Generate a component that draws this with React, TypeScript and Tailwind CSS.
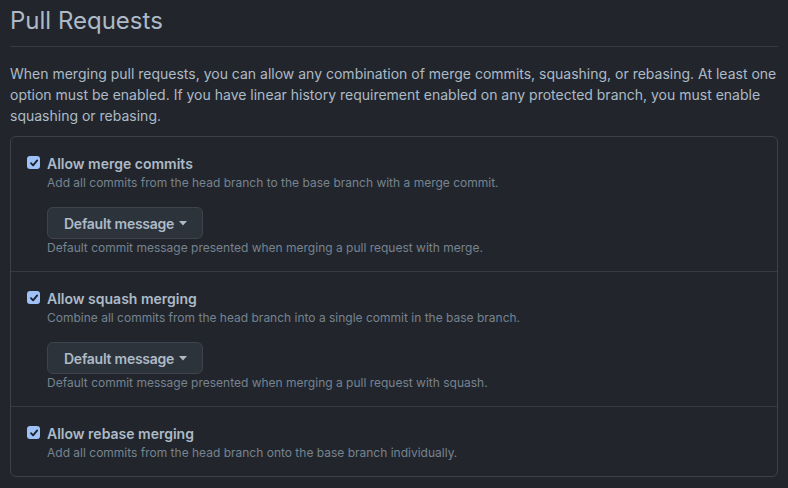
import React from "react";

function Check() {
  return (
    <span className="mt-[3px] mr-[7px] flex h-[13px] w-[13px] shrink-0 items-center justify-center rounded-[3px] bg-[#9ec1f7]">
      <svg width="10" height="10" viewBox="0 0 10 10">
        <path d="M2 5.2 L4.1 7.4 L8.2 2.4" fill="none" stroke="#1c2128" strokeWidth="1.8" strokeLinecap="round" strokeLinejoin="round" />
      </svg>
    </span>
  );
}

function Row({
  title,
  desc,
  caption,
  last,
}: {
  title: string;
  desc: string;
  caption?: string;
  last?: boolean;
}) {
  return (
    <div className={`px-4 pt-4 pb-[14px] ${last ? "" : "border-b border-[#363b42]"}`}>
      <div className="flex">
        <Check />
        <div className="flex flex-col">
          <div className="text-[14px] leading-[21px] font-semibold text-[#adbac7]">{title}</div>
          <div className="text-[12px] leading-[18px] text-[#768390]">{desc}</div>
          {caption && (
            <>
              <div className="mt-[15px]">
                <button className="flex h-8 items-center gap-[5px] rounded-[6px] border border-[#3d444d] bg-[#2d333b] pr-[15px] pl-4 text-[14px] font-semibold tracking-[-0.25px] text-[#adbac7]">
                  Default message
                  <svg width="8" height="5" viewBox="0 0 8 5">
                    <path d="M0 0 L8 0 L4 4.5 Z" fill="#adbac7" />
                  </svg>
                </button>
              </div>
              <div className="text-[12px] leading-[18px] text-[#768390]">{caption}</div>
            </>
          )}
        </div>
      </div>
    </div>
  );
}

export default function App() {
  return (
    <div
      className="h-[488px] w-[788px] overflow-hidden bg-[#22262c] px-[10px]"
      style={{ fontFamily: "Inter, 'Noto Sans', sans-serif" }}
    >
      <h2 className="border-b border-[#363b42] pt-[5px] pb-[9px] text-[24px] leading-[32px] font-normal text-[#adbac7]">
        Pull Requests
      </h2>
      <p className="mt-[16px] text-[14px] leading-[21px] text-[#adbac7]">
        When merging pull requests, you can allow any combination of merge commits, squashing, or rebasing. At least one
        option must be enabled. If you have linear history requirement enabled on any protected branch, you must enable
        squashing or rebasing.
      </p>
      <div className="mt-[10px] rounded-[6px] border border-[#3d424a]">
        <Row
          title="Allow merge commits"
          desc="Add all commits from the head branch to the base branch with a merge commit."
          caption="Default commit message presented when merging a pull request with merge."
        />
        <Row
          title="Allow squash merging"
          desc="Combine all commits from the head branch into a single commit in the base branch."
          caption="Default commit message presented when merging a pull request with squash."
        />
        <Row
          title="Allow rebase merging"
          desc="Add all commits from the head branch onto the base branch individually."
          last
        />
      </div>
    </div>
  );
}
